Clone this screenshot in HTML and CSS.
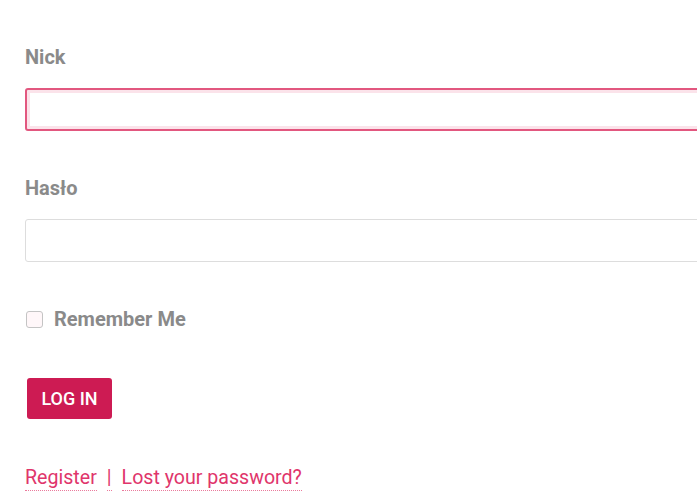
FILE: index.html
```html
<!DOCTYPE html>
<html>
<head>
<meta charset="utf-8">
<link rel="stylesheet" href="styles.css">
</head>
<body>
<form class="login">
  <div class="field">
    <label class="label" for="nick">Nick</label>
    <input class="input input-focus" id="nick" type="text">
  </div>
  <div class="field">
    <label class="label" for="pass">Hasło</label>
    <input class="input" id="pass" type="password">
  </div>
  <label class="remember"><span class="box"></span>Remember Me</label>
  <button class="btn" type="button">LOG IN</button>
  <div class="links">
    <a class="link" href="#">Register</a>
    <span class="sep">|</span>
    <a class="link" href="#">Lost your password?</a>
  </div>
</form>
</body>
</html>
```
FILE: styles.css
```css
html, body {
  margin: 0;
  padding: 0;
  background: #fff;
  overflow: hidden;
}
body {
  font-family: Roboto, "Liberation Sans", sans-serif;
  color: #8a8a8a;
}
.login {
  padding: 45px 0 0 25px;
  display: flex;
  flex-direction: column;
  align-items: flex-start;
}
.field {
  display: flex;
  flex-direction: column;
  margin-bottom: 45px;
}
.label {
  font-size: 20px;
  font-weight: 700;
  line-height: 24px;
  color: #8a8a8a;
  margin-bottom: 19px;
}
.input {
  box-sizing: border-box;
  width: 700px;
  height: 43px;
  border: 1px solid #dddddd;
  border-radius: 3px;
  background: #fff;
  margin: 0;
  outline: none;
}
.input-focus {
  border: 2px solid #e2577f;
  box-shadow: inset 0 0 0 3px #fbe3ea;
}
.remember {
  display: flex;
  align-items: center;
  font-size: 20px;
  font-weight: 700;
  line-height: 24px;
  color: #8a8a8a;
}
.box {
  box-sizing: border-box;
  width: 17px;
  height: 17px;
  border: 1px solid #c4c4c4;
  border-radius: 3px;
  background: #fff7f9;
  margin: 0 11px 0 1px;
}
.btn {
  margin-top: 47px;
  margin-left: 2px;
  width: 85px;
  height: 41px;
  border: none;
  border-radius: 3px;
  background: #cd1b53;
  color: #fff;
  font-family: Roboto, "Liberation Sans", sans-serif;
  font-size: 18px;
  font-weight: 500;
  padding: 0;
}
.links {
  margin-top: 47px;
  display: flex;
  align-items: baseline;
  font-size: 19.6px;
  line-height: 24px;
  color: #e0356b;
}
.link {
  color: #e0356b;
  text-decoration: none;
  border-bottom: 1px dotted #ea7a9c;
}
.sep {
  margin: 0 10px;
  border-bottom: 1px dotted #ea7a9c;
}
```
